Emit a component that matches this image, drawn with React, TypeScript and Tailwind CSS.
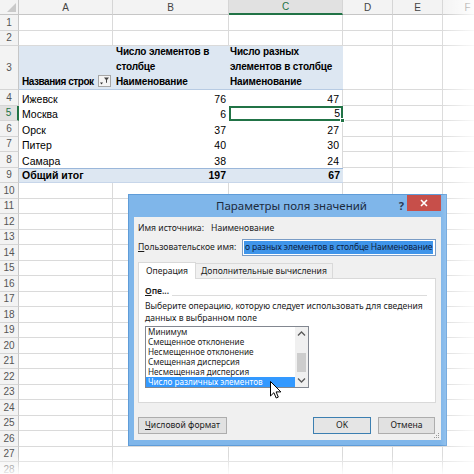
import React from "react";

const colW = ["w-[94px]", "w-[116px]", "w-[114px]", "w-[50px]", "w-[50px]", "w-[50px]"];

function RowHead({ n, h, active }: { n: number; h: string; active?: boolean }) {
  return (
    <div
      className={`${h} w-[19px] shrink-0 flex items-center justify-center text-[10px] border-b border-[#d5d5d5] ${
        active
          ? "bg-[#e1e1e1] text-[#217346] border-r-2 border-r-[#217346]"
          : "bg-[#f3f3f3] text-[#555] border-r border-r-[#c6c6c6]"
      }`}
    >
      {n}
    </div>
  );
}

function Cell({ i, h, children, className = "" }: { i: number; h: string; children?: React.ReactNode; className?: string }) {
  return (
    <div className={`${colW[i]} ${h} shrink-0 border-r border-b border-[#dadada] ${className}`}>{children}</div>
  );
}

function PlainRow({ n, h = "h-[15.5px]" }: { n: number; h?: string }) {
  return (
    <div className="flex">
      <RowHead n={n} h={h} />
      {[0, 1, 2, 3, 4, 5].map((i) => (
        <Cell key={i} i={i} h={h} />
      ))}
    </div>
  );
}

function DataRow({ n, city, b, c, active }: { n: number; city: string; b: number; c: number; active?: boolean }) {
  const h = "h-[15.5px]";
  return (
    <div className="flex">
      <RowHead n={n} h={h} active={active} />
      <div className={`${colW[0]} ${h} shrink-0 pl-[3px] flex items-end leading-[14px]`}>{city}</div>
      <div className={`${colW[1]} ${h} shrink-0 pr-[3px] flex items-end justify-end leading-[14px]`}>{b}</div>
      {active ? (
        <div className={`${colW[2]} ${h} shrink-0 relative border-2 border-[#217346] pr-[1px] flex items-end justify-end leading-[12px]`}>
          {c}
          <span className="absolute -right-[4px] -bottom-[4px] w-[5px] h-[5px] bg-[#217346] border border-white" />
        </div>
      ) : (
        <div className={`${colW[2]} ${h} shrink-0 pr-[3px] flex items-end justify-end leading-[14px] border-r border-[#dadada]`}>{c}</div>
      )}
      <Cell i={3} h={h} />
      <Cell i={4} h={h} />
      <Cell i={5} h={h} />
    </div>
  );
}

function FilterButton() {
  return (
    <div className="w-[13px] h-[12px] mb-[2px] shrink-0 border border-[#a6a6a6] bg-[#f4f4f4] flex items-center justify-center">
      <svg width="11" height="10" viewBox="0 0 11 10">
        <path d="M1 6.5h3l-1.5 2z" fill="#333" />
        <path d="M5 1.5h5l-2 2.5v3l-1-0.6v-2.4z" fill="#444" />
      </svg>
    </div>
  );
}

function Sheet() {
  const bandText = "font-bold text-[10px] tracking-[-0.15px] leading-[15px] whitespace-nowrap";
  return (
    <div className="font-['Liberation_Sans',Arial,sans-serif] text-[10.5px] text-black">
      {/* column letters */}
      <div className="flex h-[15px]">
        <div className="w-[19px] shrink-0 bg-[#f3f3f3] border-r border-b border-[#c6c6c6] relative">
          <svg className="absolute right-[2px] bottom-[2px]" width="9" height="9" viewBox="0 0 9 9">
            <path d="M9 0v9H0z" fill="#c9c9c9" />
          </svg>
        </div>
        {["A", "B", "C", "D", "E", "F"].map((l, i) => (
          <div
            key={l}
            className={`${colW[i]} shrink-0 flex items-center justify-center text-[10px] border-r border-[#d5d5d5] ${
              l === "C"
                ? "bg-[#e1e1e1] text-[#217346] border-b-2 border-b-[#217346]"
                : "bg-[#f3f3f3] text-[#444] border-b border-b-[#c6c6c6]"
            }`}
          >
            {l}
          </div>
        ))}
      </div>
      <PlainRow n={1} />
      <PlainRow n={2} />
      {/* pivot header */}
      <div className="flex">
        <RowHead n={3} h="h-[44px]" />
        <div className="flex bg-[#dde7f2] border-b border-[#b7cbe3]">
          <div className={`${colW[0]} h-[43px] shrink-0 pl-[3px] flex items-end justify-between pr-[2px] ${bandText}`}>
            <span className="tracking-[-0.45px]">Названия строк</span>
            <FilterButton />
          </div>
          <div className={`${colW[1]} h-[43px] shrink-0 pl-[3px] flex flex-col justify-end ${bandText}`}>
            <span>Число элементов в</span>
            <span>столбце</span>
            <span>Наименование</span>
          </div>
          <div className={`${colW[2]} h-[43px] shrink-0 pl-[1px] flex flex-col justify-end ${bandText}`}>
            <span>Число разных</span>
            <span>элементов в столбце</span>
            <span>Наименование</span>
          </div>
        </div>
        <Cell i={3} h="h-[44px]" />
        <Cell i={4} h="h-[44px]" />
        <Cell i={5} h="h-[44px]" />
      </div>
      <DataRow n={4} city="Ижевск" b={76} c={47} />
      <DataRow n={5} city="Москва" b={6} c={5} active />
      <DataRow n={6} city="Орск" b={37} c={27} />
      <DataRow n={7} city="Питер" b={40} c={30} />
      <DataRow n={8} city="Самара" b={38} c={24} />
      <div className="flex">
        <RowHead n={9} h="h-[15.5px]" />
        <div className="flex bg-[#dde7f2] border-t border-[#9bb7da] border-b border-b-[#c7d6ea] h-[15.5px] font-bold">
          <div className={`${colW[0]} shrink-0 pl-[3px] flex items-end leading-[13px]`}>Общий итог</div>
          <div className={`${colW[1]} shrink-0 pr-[3px] flex items-end justify-end leading-[13px]`}>197</div>
          <div className={`${colW[2]} shrink-0 pr-[3px] flex items-end justify-end leading-[13px]`}>67</div>
        </div>
        <Cell i={3} h="h-[15.5px]" />
        <Cell i={4} h="h-[15.5px]" />
        <Cell i={5} h="h-[15.5px]" />
      </div>
      {Array.from({ length: 19 }, (_, k) => (
        <PlainRow key={k} n={10 + k} />
      ))}
    </div>
  );
}

function Ul({ c }: { c: string }) {
  return <span className="underline underline-offset-[1px]">{c}</span>;
}

function Cursor() {
  return (
    <svg className="absolute left-[270px] top-[381px]" width="12" height="19" viewBox="0 0 12 19">
      <path
        d="M0.5 0.5v14.5l3.4-3.3 2.3 5.3 2.1-0.9-2.2-5.2h4.8z"
        fill="#fff"
        stroke="#000"
        strokeWidth="1"
        strokeLinejoin="round"
      />
    </svg>
  );
}

const listItems = [
  "Минимум",
  "Смещенное отклонение",
  "Несмещенное отклонение",
  "Смещенная дисперсия",
  "Несмещенная дисперсия",
];

function Dialog() {
  return (
    <div className="absolute left-[128px] top-[194px] w-[319px] h-[252px] bg-[#7fb6ea] border border-[#5f9cd8] flex flex-col px-[5px] pb-[5px] font-['Noto_Sans','Open_Sans',sans-serif] text-[8.6px] text-[#1b1b1b]">
      {/* title bar */}
      <div className="h-[22px] shrink-0 relative flex items-center justify-center">
        <span className="text-[11.5px] text-[#1d2b3d] pl-[8px]">Параметры поля значений</span>
        <span className="absolute right-[37px] top-[3px] text-[11px] font-bold text-[#2b3a55]">?</span>
        <div className="absolute right-[0px] top-0 w-[34px] h-[16px] bg-[#c74f4a] flex items-center justify-center">
          <svg width="8" height="8" viewBox="0 0 8 8">
            <path d="M1 1l6 6M7 1l-6 6" stroke="#fff" strokeWidth="1.6" />
          </svg>
        </div>
      </div>
      {/* body */}
      <div className="flex-1 bg-[#f0f0f0] px-[4px] pt-[5px] flex flex-col relative">
        <div className="h-[12px] flex items-center">
          <span className="w-[73px]">Имя источника:</span>
          <span>Наименование</span>
        </div>
        <div className="h-[17px] mt-[5px] flex items-center">
          <span className="w-[104px]">
            <Ul c="П" />ользовательское имя:
          </span>
          <div className="flex-1 h-[17px] mr-[1px] bg-white border border-[#7a9cc5] flex items-center px-[1px] overflow-hidden whitespace-nowrap">
            <span className="bg-[#3f95ea] text-[#0c1f44] text-[8.55px] tracking-[-0.1px] leading-[13px] px-[1px]">
              о разных элементов в столбце Наименование
            </span>
          </div>
        </div>
        {/* tabs */}
        <div className="mt-[6px] flex items-end h-[17px] relative z-10">
          <div className="h-[17px] w-[58px] bg-white border border-[#d9d9d9] border-b-0 flex items-center justify-center">
            Операция
          </div>
          <div className="h-[16px] w-[137px] bg-[#f0f0f0] border border-[#d9d9d9] border-l-0 flex items-center justify-center">
            Дополнительные вычисления
          </div>
        </div>
        <div className="h-[125px] mr-[1px] -mt-px bg-white border border-[#d9d9d9] px-[6px] pt-[6px] flex flex-col">
          <div className="flex items-center h-[12px]">
            <span className="font-semibold">
              <Ul c="О" />
              пе...
            </span>
            <div className="flex-1 h-px bg-[#dcdcdc] ml-[3px] mt-[9px] mr-[2px]" />
          </div>
          <div className="mt-[3px] leading-[12px]">
            Выберите операцию, которую следует использовать для сведения
            <br />
            данных в выбранном поле
          </div>
          <div className="mt-[2px] w-[164px] h-[62px] border border-[#828790] bg-white flex">
            <div className="flex-1 flex flex-col text-[8.2px] leading-[10px]">
              {listItems.map((t) => (
                <div key={t} className="h-[10px] pl-[2px] whitespace-nowrap overflow-hidden">
                  {t}
                </div>
              ))}
              <div className="h-[10px] pl-[2px] bg-[#3399ff] text-white whitespace-nowrap overflow-hidden">
                Число различных элементов
              </div>
            </div>
            <div className="w-[13px] bg-[#f0f0f0] flex flex-col items-center">
              <svg className="mt-[3px]" width="9" height="7" viewBox="0 0 9 7">
                <path d="M1 5.5l3.5-3.5 3.5 3.5" stroke="#5a5a5a" strokeWidth="1.3" fill="none" />
              </svg>
              <div className="mt-[16px] w-[9px] h-[19px] bg-[#cdcdcd]" />
              <svg className="mt-[5px]" width="9" height="7" viewBox="0 0 9 7">
                <path d="M1 1.5l3.5 3.5 3.5-3.5" stroke="#5a5a5a" strokeWidth="1.3" fill="none" />
              </svg>
            </div>
          </div>
        </div>
        {/* buttons */}
        <div className="mt-[14px] flex items-center mr-[2px]">
          <div className="w-[89px] h-[17px] bg-[#e1e1e1] border border-[#adadad] flex items-center justify-center">
            <span>
              <Ul c="Ч" />
              исловой формат
            </span>
          </div>
          <div className="flex-1" />
          <div className="w-[58px] h-[17px] bg-[#e5e5e5] border border-[#3c7fb1] flex items-center justify-center">OK</div>
          <div className="w-[57px] h-[17px] ml-[7px] bg-[#e1e1e1] border border-[#adadad] flex items-center justify-center">
            Отмена
          </div>
        </div>
        <svg className="absolute right-[1px] bottom-[1px]" width="8" height="8" viewBox="0 0 8 8">
          <rect x="6" y="2" width="1" height="1" fill="#9a9a9a" />
          <rect x="4" y="4" width="1" height="1" fill="#9a9a9a" />
          <rect x="6" y="4" width="1" height="1" fill="#9a9a9a" />
          <rect x="2" y="6" width="1" height="1" fill="#9a9a9a" />
          <rect x="4" y="6" width="1" height="1" fill="#9a9a9a" />
          <rect x="6" y="6" width="1" height="1" fill="#9a9a9a" />
        </svg>
      </div>
    </div>
  );
}

export default function App() {
  return (
    <div className="relative w-[474px] h-[474px] overflow-hidden bg-white">
      <Sheet />
      <Dialog />
      <Cursor />
      {/* soft white edges of the view */}
      <div className="absolute right-0 top-0 w-[34px] h-full bg-gradient-to-r from-transparent to-white/85 pointer-events-none" />
      <div className="absolute left-0 bottom-0 w-full h-[18px] bg-gradient-to-b from-transparent to-white/90 pointer-events-none" />
    </div>
  );
}
